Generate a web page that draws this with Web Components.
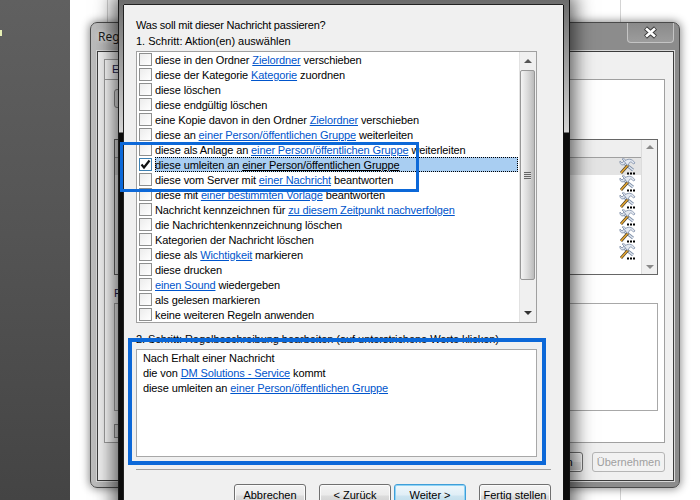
<!DOCTYPE html>
<html lang="de">
<head>
<meta charset="utf-8">
<title>Regeln</title>
<style>
  html, body { margin: 0; padding: 0; height: 100%; overflow: hidden; background: #fff; }
  body { font: 11px/15px "Liberation Sans", "Noto Sans", sans-serif; color: #000; }
</style>
</head>
<body>
<rule-desktop>
  <back-window></back-window>
  <wizard-dialog>
    <action-row>diese in den Ordner <rule-link>Zielordner</rule-link> verschieben</action-row>
    <action-row>diese der Kategorie <rule-link>Kategorie</rule-link> zuordnen</action-row>
    <action-row>diese löschen</action-row>
    <action-row>diese endgültig löschen</action-row>
    <action-row>eine Kopie davon in den Ordner <rule-link>Zielordner</rule-link> verschieben</action-row>
    <action-row>diese an <rule-link>einer Person/öffentlichen Gruppe</rule-link> weiterleiten</action-row>
    <action-row>diese als Anlage an <rule-link>einer Person/öffentlichen Gruppe</rule-link> weiterleiten</action-row>
    <action-row checked selected>diese umleiten an <rule-link>einer Person/öffentlichen Gruppe</rule-link></action-row>
    <action-row>diese vom Server mit <rule-link>einer Nachricht</rule-link> beantworten</action-row>
    <action-row>diese mit <rule-link>einer bestimmten Vorlage</rule-link> beantworten</action-row>
    <action-row>Nachricht kennzeichnen für <rule-link>zu diesem Zeitpunkt nachverfolgen</rule-link></action-row>
    <action-row>die Nachrichtenkennzeichnung löschen</action-row>
    <action-row>Kategorien der Nachricht löschen</action-row>
    <action-row>diese als <rule-link>Wichtigkeit</rule-link> markieren</action-row>
    <action-row>diese drucken</action-row>
    <action-row><rule-link>einen Sound</rule-link> wiedergeben</action-row>
    <action-row>als gelesen markieren</action-row>
    <action-row>keine weiteren Regeln anwenden</action-row>
    <div slot="desc">Nach Erhalt einer Nachricht</div>
    <div slot="desc">die von <rule-link>DM Solutions - Service</rule-link> kommt</div>
    <div slot="desc">diese umleiten an <rule-link>einer Person/öffentlichen Gruppe</rule-link></div>
  </wizard-dialog>
  <mark-frame style="left:120px;top:142px;width:299px;height:50px;border-width:3.5px"></mark-frame>
  <mark-frame style="left:128px;top:338px;width:418px;height:127px"></mark-frame>
</rule-desktop>

<script>
class RuleDesktop extends HTMLElement {
  constructor() {
    super();
    this.attachShadow({ mode: 'open' }).innerHTML = `
    <style>
    :host {
      display: block;
      position: relative;
      width: 700px;
      height: 500px;
      overflow: hidden;
      background: #fff;
    }
    .side {
      position: absolute;
      left: 0;
      top: 0;
      width: 70px;
      height: 500px;
      background: linear-gradient(#606060, #565656 40%, #444);
    }
    .side i {
      position: absolute;
      left: 0;
      top: 30px;
      width: 2px;
      height: 6px;
      background: #e6efb4;
    }
    .line {
      position: absolute;
      width: 1px;
      background: #d4d4d4;
    }
    </style>
    <div class="side"><i></i></div>
    <div class="line" style="left:107px;top:0;height:22px"></div>
    <div class="line" style="left:620px;top:0;height:500px"></div>
    <slot></slot>
    `;
  }
}

class PushButton extends HTMLElement {
  constructor() {
    super();
    this.attachShadow({ mode: 'open' }).innerHTML = `
    <style>
    :host {
      display: flex;
      align-items: center;
      justify-content: center;
      box-sizing: border-box;
      width: 72px;
      height: 23px;
      border: 1px solid #707070;
      border-radius: 3px;
      background: linear-gradient(#f3f3f3, #ebebeb 48%, #dcdcdc 52%, #cfcfcf);
      box-shadow: inset 0 0 0 1px #fbfbfb;
      white-space: nowrap;
    }
    :host([primary]) {
      border-color: #3f9ed8;
      background: linear-gradient(#eef7fb, #e0eef6 48%, #cde4f0 52%, #bcdbe9);
      box-shadow: inset 0 0 0 1px #8fd3f5;
    }
    :host([disabled]) {
      border-color: #b5b5b5;
      background: #f2f2f2;
      color: #a0a0a0;
      box-shadow: none;
    }
    </style>
    <slot></slot>
    `;
  }
}

class ToolsIcon extends HTMLElement {
  constructor() {
    super();
    this.attachShadow({ mode: 'open' }).innerHTML = `
    <style>
    :host { display: block; width: 17px; height: 17px; }
    svg { display: block; }
    </style>
    <svg width="17" height="17" viewBox="0 0 17 17">
      <path d="M5 5 14 12" stroke="#7d8ea8" stroke-width="3" fill="none"/>
      <path d="M5 5 14 12" stroke="#e2e8f0" stroke-width="1.4" fill="none"/>
      <path d="M1 3 3 5 5 3 3 1C5 0 7 1.500 7 4L6 6 4 7C1.500 7 .5 5 1 3Z" fill="#dbe2ec" stroke="#7d8ea8" stroke-width=".8"/>
      <path d="M2 15 9 7" stroke="#4a4030" stroke-width="2.800" fill="none"/>
      <path d="M2 15 9 7" stroke="#e8a830" stroke-width="1.500" fill="none"/>
      <path d="M5.500 3.500C8 .5 13 0 16 5L14.500 6C13 4 11.500 3.500 10.500 4.500L9 7.500 7 6Z" fill="#e4e9f1" stroke="#7d8ea8" stroke-width=".8"/>
      <rect x="8" y="14.500" width="2" height="2" fill="#000"/>
      <rect x="11" y="14.500" width="2" height="2" fill="#000"/>
      <rect x="14" y="14.500" width="2" height="2" fill="#000"/>
    </svg>
    `;
  }
}

class BackWindow extends HTMLElement {
  constructor() {
    super();
    const rows = Array.from({ length: 6 }, (_, i) =>
      `<div class="row${i === 0 ? ' sel' : ''}"><tools-icon></tools-icon></div>`).join('');
    this.attachShadow({ mode: 'open' }).innerHTML = `
    <style>
    :host {
      display: flex;
      flex-direction: column;
      position: absolute;
      left: 90px;
      top: 22px;
      width: 590px;
      height: 466px;
      box-sizing: border-box;
      padding: 0 5px 6px 6px;
      border: 1px solid #4a4a4a;
      border-radius: 7px;
      background: linear-gradient(90deg, #bdbdbd, #8c8c8c 30%, #8c8c8c);
      box-shadow: 0 0 9px 1px rgba(0, 0, 0, .45);
    }
    .title {
      display: flex;
      justify-content: space-between;
      flex: 0 0 28px;
      font: 12px/17px "Noto Sans", sans-serif;
      color: #1c1c1c;
    }
    .title span { padding: 5px 0 0 1px; text-shadow: 0 0 5px #fff; }
    .close {
      display: flex;
      align-items: center;
      justify-content: center;
      box-sizing: border-box;
      width: 47px;
      height: 20px;
      border: 1px solid #c4c4c4;
      border-top: 0;
      border-radius: 0 0 4px 4px;
      background: linear-gradient(#8a8a8a, #9c9c9c);
    }
    .body {
      display: flex;
      flex-direction: column;
      flex: 1;
      box-sizing: border-box;
      padding: 7px 8px 0 6px;
      border: 1px solid #3c3c3c;
      background: #f0f0f0;
      box-shadow: 0 0 0 1px #d8d8d8;
    }
    .tab {
      box-sizing: border-box;
      width: 90px;
      height: 21px;
      padding: 2px 7px;
      margin-bottom: -1px;
      border: 1px solid #a0a0a0;
      border-bottom: 0;
      background: #fff;
      color: #1a1a4a;
      white-space: nowrap;
    }
    .page {
      display: flex;
      flex-direction: column;
      box-sizing: border-box;
      height: 364px;
      padding: 9px 6px 0 9px;
      border: 1px solid #a0a0a0;
      background: #fff;
    }
    .tool {
      width: 60px;
      height: 19px;
      flex: none;
      box-sizing: border-box;
      border: 1px solid #909090;
      border-radius: 3px;
      background: #eee;
    }
    .rules {
      display: flex;
      box-sizing: border-box;
      height: 136px;
      margin-top: 31px;
      border: 1px solid #666;
    }
    .cols { flex: 1; }
    .head {
      height: 17px;
      border-bottom: 1px solid #a0a0a0;
      background: #efefef;
    }
    .row {
      display: flex;
      justify-content: flex-end;
      height: 17px;
      padding-right: 5px;
    }
    .row.sel { background: #e4e4e4; }
    .bar {
      display: flex;
      flex-direction: column;
      justify-content: space-between;
      align-items: center;
      width: 16px;
      padding: 5px 0;
      box-sizing: border-box;
      background: #f0f0f0;
      border-left: 1px solid #dcdcdc;
    }
    .up, .down { width: 0; height: 0; border: 4px solid transparent; }
    .up { border-top: 0; border-bottom-color: #8a8a8a; }
    .down { border-bottom: 0; border-top-color: #8a8a8a; }
    .label { margin-top: 10px; line-height: 16px; height: 18px; color: #1a1a4a; white-space: nowrap; }
    .text {
      box-sizing: border-box;
      height: 108px;
      border: 1px solid #a8a8a8;
    }
    .small {
      width: 60px;
      height: 14px;
      margin-top: 13px;
      box-sizing: border-box;
      border: 1px solid #909090;
      background: #eee;
    }
    .foot {
      display: flex;
      justify-content: flex-end;
      gap: 9px;
      margin-top: 9px;
    }
    push-button { height: 20px; }
    .foot :first-child { width: 74px; }
    .foot :last-child { width: 73px; }
    </style>
    <div class="title">
      <span>Regeln</span>
      <div class="close">
        <svg width="15" height="13" viewBox="0 0 15 13">
          <path d="M2.500 2 12.500 11M12.500 2 2.500 11" stroke="#3a3a3a" stroke-width="4.400" fill="none"/>
          <path d="M3 2.500 12 10.500M12 2.500 3 10.500" stroke="#fff" stroke-width="2.600" fill="none"/>
        </svg>
      </div>
    </div>
    <div class="body">
      <div class="tab">E-Mail</div>
      <div class="page">
        <div class="tool"></div>
        <div class="rules">
          <div class="cols"><div class="head"></div>${rows}</div>
          <div class="bar"><div class="up"></div><div class="down"></div></div>
        </div>
        <div class="label">Regeln</div>
        <div class="text"></div>
        <div class="small"></div>
      </div>
      <div class="foot">
        <push-button>Abbrechen</push-button>
        <push-button disabled>Übernehmen</push-button>
      </div>
    </div>
    `;
  }
}

class WizardDialog extends HTMLElement {
  constructor() {
    super();
    this.attachShadow({ mode: 'open' }).innerHTML = `
    <style>
    :host {
      display: block;
      position: absolute;
      left: 118px;
      top: 0;
      width: 452px;
      height: 520px;
      box-sizing: border-box;
      padding: 5px 6px 6px 5px;
      border-left: 1px solid #1a1a1a;
      border-right: 1px solid #111;
      background: linear-gradient(#6c6c6c, #9c9c9c 60px, #d4d4d4 132px, #0c0c0c 133px);
      box-shadow: 0 0 18px 5px rgba(0, 0, 0, .62);
    }
    .inner {
      box-sizing: border-box;
      height: 100%;
      padding: 12px 12px 0 12px;
      background: #f0f0f0;
      box-shadow: 0 -1px 0 #222, 1px 0 0 #111, -1px 0 0 #222;
    }
    .head { height: 16px; line-height: 16px; white-space: nowrap; }
    .ask { letter-spacing: -.22px; }
    .list {
      display: flex;
      box-sizing: border-box;
      width: 401px;
      height: 272px;
      margin-top: 2px;
      border: 1px solid #a0a0a0;
      background: #fff;
    }
    .rows { flex: 1; min-width: 0; }
    .bar {
      display: flex;
      flex-direction: column;
      align-items: center;
      box-sizing: border-box;
      width: 17px;
      border-left: 1px solid #e2e2e2;
      background: #f0f0f0;
    }
    .arrow { display: flex; align-items: center; justify-content: center; flex: 0 0 18px; }
    .up, .down { width: 0; height: 0; border: 4px solid transparent; }
    .up { border-top: 0; border-bottom-color: #555; }
    .down { border-bottom: 0; border-top-color: #333; }
    .thumb {
      display: flex;
      flex-direction: column;
      justify-content: center;
      align-items: center;
      gap: 1px;
      box-sizing: border-box;
      width: 15px;
      height: 210px;
      margin-left: -2px;
      border: 1px solid #979797;
      border-radius: 2px;
      background: linear-gradient(90deg, #f4f4f4, #d8d8d8 55%, #bbb);
    }
    .thumb i { display: block; width: 7px; height: 1px; background: #666; box-shadow: 0 1px 0 #ddd; }
    .track { flex: 1; }
    .step2 { margin-top: 8px; letter-spacing: -.05px; }
    .desc {
      box-sizing: border-box;
      width: 401px;
      height: 108px;
      margin-top: 2px;
      padding: 1px 6px 0;
      border: 1px solid #a8a8a8;
      background: #fff;
      letter-spacing: -.11px;
    }
    .sep {
      height: 1px;
      margin-top: 12px;
      background: #a0a0a0;
    }
    .buttons {
      display: flex;
      justify-content: flex-end;
      gap: 13px;
      margin-top: 14px;
    }
    .next { margin-left: -10px; }
    </style>
    <div class="inner">
      <div class="head ask">Was soll mit dieser Nachricht passieren?</div>
      <div class="head">1. Schritt: Aktion(en) auswählen</div>
      <div class="list">
        <div class="rows"><slot></slot></div>
        <div class="bar">
          <div class="arrow"><div class="up"></div></div>
          <div class="thumb"><i></i><i></i><i></i><i></i></div>
          <div class="track"></div>
          <div class="arrow"><div class="down"></div></div>
        </div>
      </div>
      <div class="head step2">2. Schritt: Regelbeschreibung bearbeiten (auf unterstrichene Werte klicken)</div>
      <div class="desc"><slot name="desc"></slot></div>
      <div class="sep"></div>
      <div class="buttons">
        <push-button>Abbrechen</push-button>
        <push-button>&lt; Zurück</push-button>
        <push-button class="next" primary>Weiter &gt;</push-button>
        <push-button>Fertig stellen</push-button>
      </div>
    </div>
    `;
  }
}

class ActionRow extends HTMLElement {
  constructor() {
    super();
    this.attachShadow({ mode: 'open' }).innerHTML = `
    <style>
    :host {
      display: flex;
      align-items: center;
      height: 15px;
      white-space: nowrap;
      letter-spacing: -.12px;
    }
    .box {
      flex: none;
      box-sizing: border-box;
      width: 13px;
      height: 13px;
      margin: 0 3px 0 2px;
      border: 1px solid #8e8f8f;
      background: linear-gradient(135deg, #ececec, #fff);
    }
    :host([selected]) .box { border-color: #3c7fb1; background: #fff; }
    svg { display: none; }
    :host([checked]) svg { display: block; }
    .label { flex: 1; margin-right: 1px; height: 15px; line-height: 17px; }
    :host([selected]) .label {
      --link-color: #000;
      background: #a9cef2;
      outline: 1px dotted #000;
      outline-offset: -1px;
    }
    </style>
    <div class="box">
      <svg width="11" height="11" viewBox="0 0 11 11">
        <path d="M1.500 5.500 4 8.500 9.500 1.500" stroke="#111" stroke-width="2.200" fill="none"/>
      </svg>
    </div>
    <div class="label"><slot></slot></div>
    `;
  }
}

class RuleLink extends HTMLElement {
  constructor() {
    super();
    // no whitespace round the slot, it would get underlined too
    this.attachShadow({ mode: 'open' }).innerHTML =
      '<style>:host { display: inline; color: var(--link-color, #0055cc); text-decoration: underline; }</style><slot></slot>';
  }
}

class MarkFrame extends HTMLElement {
  constructor() {
    super();
    this.attachShadow({ mode: 'open' }).innerHTML = `
    <style>
    :host {
      display: block;
      position: absolute;
      box-sizing: border-box;
      border: 4px solid #0c68d8;
    }
    </style>
    `;
  }
}

customElements.define('rule-desktop', RuleDesktop);
customElements.define('push-button', PushButton);
customElements.define('tools-icon', ToolsIcon);
customElements.define('back-window', BackWindow);
customElements.define('wizard-dialog', WizardDialog);
customElements.define('action-row', ActionRow);
customElements.define('rule-link', RuleLink);
customElements.define('mark-frame', MarkFrame);
</script>
</body>
</html>
